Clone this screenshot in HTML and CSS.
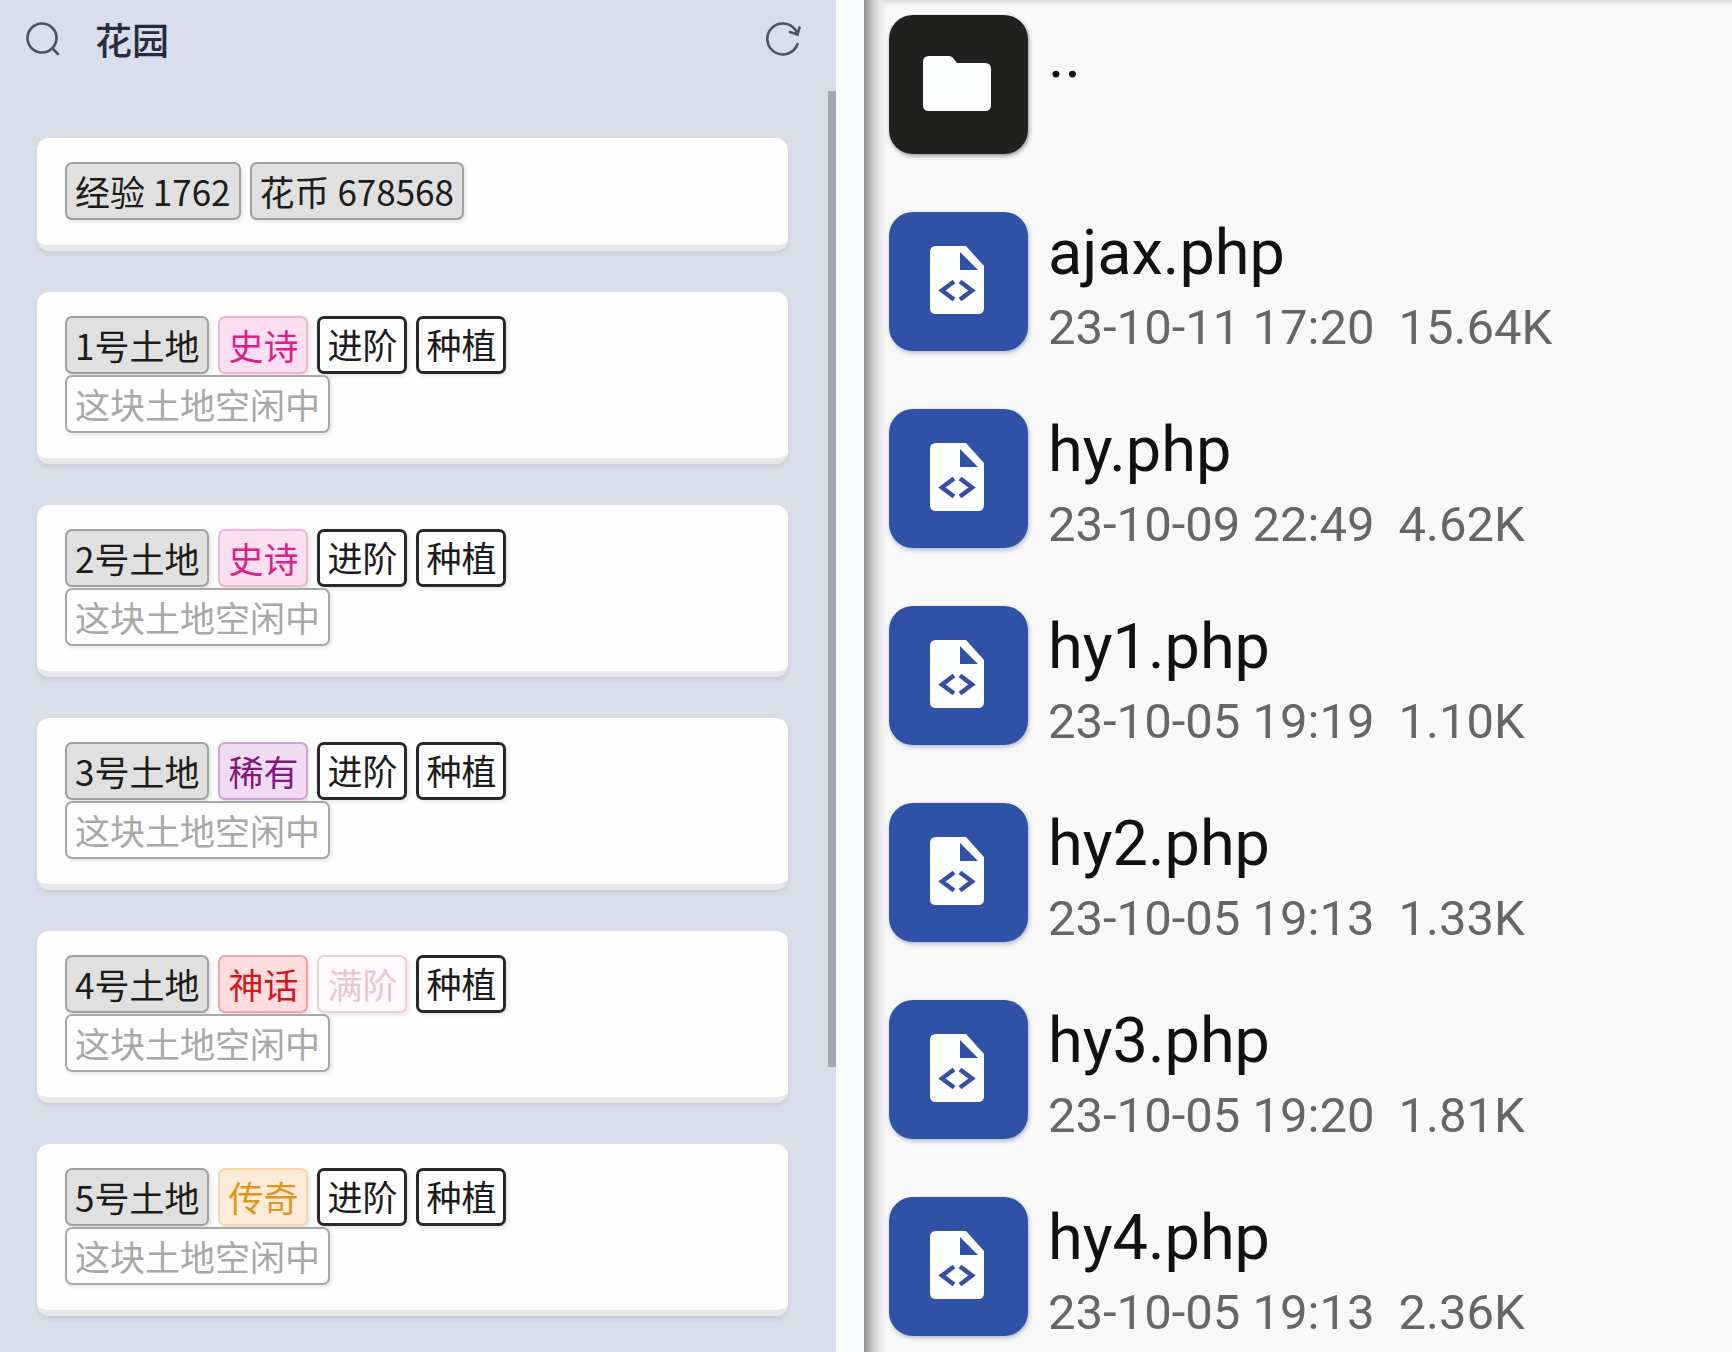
FILE: index.html
```html
<!DOCTYPE html>
<html lang="zh-CN">
<head>
<meta charset="utf-8">
<meta name="viewport" content="width=device-width, initial-scale=1">
<title>花园</title>
<link rel="stylesheet" href="styles.css">
</head>
<body>
<svg class="sprite" aria-hidden="true">
  <symbol id="php" viewBox="0 0 54 68">
    <path fill="#fcfeff" fill-rule="evenodd" d="M6 0H36L54 20V62Q54 68 48 68H6Q0 68 0 62V6Q0 0 6 0ZM30 6V24H48Z"/>
    <path fill="none" stroke="#3350a4" stroke-width="4.500" d="M24 35.500L12 44.500L24 53.500M30 35.500L42 44.500L30 53.500"/>
  </symbol>
</svg>
<div class="app">
  <main class="garden">
    <header class="bar">
      <button class="icon-btn" aria-label="搜索">
        <svg width="34" height="34" viewBox="0 0 34 34" fill="none" stroke="#4b5263" stroke-width="2.600" stroke-linecap="round"><circle cx="16" cy="16" r="14.500"/><path d="M26.500 26.500L32 32"/></svg>
      </button>
      <h1 class="title">花园</h1>
      <button class="icon-btn" aria-label="刷新">
        <svg width="36" height="36" viewBox="0 0 36 36" fill="none" stroke="#4b5263" stroke-width="2.600" stroke-linecap="round"><path d="M32.500 23A15.500 15.500 0 1 1 30.500 9L32.500 12.500M25 11L32.500 13.500L34.500 6.500"/></svg>
      </button>
    </header>
    <div class="cards">
      <section class="card">
        <div class="row"><span class="tag plain">经验 1762</span><span class="tag plain">花币 678568</span></div>
      </section>
      <section class="card">
        <div class="row"><span class="tag plain">1号土地</span><span class="tag epic">史诗</span><button class="tag action">进阶</button><button class="tag action">种植</button></div>
        <div class="row"><span class="tag idle">这块土地空闲中</span></div>
      </section>
      <section class="card">
        <div class="row"><span class="tag plain">2号土地</span><span class="tag epic">史诗</span><button class="tag action">进阶</button><button class="tag action">种植</button></div>
        <div class="row"><span class="tag idle">这块土地空闲中</span></div>
      </section>
      <section class="card">
        <div class="row"><span class="tag plain">3号土地</span><span class="tag rare">稀有</span><button class="tag action">进阶</button><button class="tag action">种植</button></div>
        <div class="row"><span class="tag idle">这块土地空闲中</span></div>
      </section>
      <section class="card">
        <div class="row"><span class="tag plain">4号土地</span><span class="tag myth">神话</span><button class="tag maxed" disabled>满阶</button><button class="tag action">种植</button></div>
        <div class="row"><span class="tag idle">这块土地空闲中</span></div>
      </section>
      <section class="card">
        <div class="row"><span class="tag plain">5号土地</span><span class="tag legend">传奇</span><button class="tag action">进阶</button><button class="tag action">种植</button></div>
        <div class="row"><span class="tag idle">这块土地空闲中</span></div>
      </section>
    </div>
    <div class="scrollbar"></div>
  </main>
  <nav class="files" aria-label="文件">
    <a class="file" href="#"><span class="tile folder"><svg width="68" height="55" viewBox="0 0 68 55"><path fill="#fdfefe" d="M6 0H26Q28 0 30 2L34 7H62Q68 7 68 13V49Q68 55 62 55H6Q0 55 0 49V6Q0 0 6 0Z"/></svg></span><span class="info"><span class="name">..</span></span></a>
    <a class="file" href="#"><span class="tile"><svg width="54" height="68"><use href="#php"/></svg></span><span class="info"><span class="name">ajax.php</span><span class="meta"><span>23-10-11 17:20</span><span>15.64K</span></span></span></a>
    <a class="file" href="#"><span class="tile"><svg width="54" height="68"><use href="#php"/></svg></span><span class="info"><span class="name">hy.php</span><span class="meta"><span>23-10-09 22:49</span><span>4.62K</span></span></span></a>
    <a class="file" href="#"><span class="tile"><svg width="54" height="68"><use href="#php"/></svg></span><span class="info"><span class="name">hy1.php</span><span class="meta"><span>23-10-05 19:19</span><span>1.10K</span></span></span></a>
    <a class="file" href="#"><span class="tile"><svg width="54" height="68"><use href="#php"/></svg></span><span class="info"><span class="name">hy2.php</span><span class="meta"><span>23-10-05 19:13</span><span>1.33K</span></span></span></a>
    <a class="file" href="#"><span class="tile"><svg width="54" height="68"><use href="#php"/></svg></span><span class="info"><span class="name">hy3.php</span><span class="meta"><span>23-10-05 19:20</span><span>1.81K</span></span></span></a>
    <a class="file" href="#"><span class="tile"><svg width="54" height="68"><use href="#php"/></svg></span><span class="info"><span class="name">hy4.php</span><span class="meta"><span>23-10-05 19:13</span><span>2.36K</span></span></span></a>
  </nav>
</div>
</body>
</html>
```
FILE: styles.css
```css
* {
  box-sizing: border-box;
}

body {
  margin: 0;
  background: #fafbfd;
  font-family: "Noto Sans CJK SC", sans-serif;
}

.sprite {
  display: none;
}

.app {
  display: grid;
  grid-template-columns: 836fr 868fr;
  gap: 28px;
  min-height: 100vh;
}

/* Garden pane */
.garden {
  position: relative;
  background: #d8deea;
}

.bar {
  display: flex;
  align-items: center;
  height: 78px;
  padding: 0 35px 0 26px;
}

.icon-btn {
  display: flex;
  padding: 0;
  border: 0;
  background: none;
}

.title {
  flex: 1;
  margin: 0 0 0 35px;
  color: #262c3d;
  font-size: 37px;
  font-weight: 500;
  line-height: 52px;
}

.cards {
  display: flex;
  flex-direction: column;
  gap: 41px;
  padding: 60px 48px 34px 37px;
}

.card {
  display: flex;
  flex-direction: column;
  gap: 1px;
  padding: 24px 28px 25px;
  border-bottom: 6px solid #e6e8ea;
  border-radius: 12px;
  background: #fefefe;
  box-shadow: 0 3px 4px rgba(120, 120, 130, 0.15);
}

.row {
  display: flex;
  gap: 9px;
}

.tag {
  height: 58px;
  padding: 0 8px;
  border: 2px solid;
  border-radius: 7px;
  font-family: inherit;
  font-size: 35px;
  font-weight: 400;
  line-height: 54px;
  white-space: nowrap;
  box-shadow: 2px 2px 4px rgba(0, 0, 0, 0.1);
}

.plain {
  border-color: #a0a0a0;
  background: #e0e0e0;
  color: #1c1c1c;
}

.action {
  border-width: 3px;
  padding: 0 7px 2px;
  line-height: 50px;
  border-color: #28282a;
  background: #fdfdfe;
  color: #1c1c1c;
}

.idle {
  border-color: #a8a8a8;
  background: #fdfdfd;
  color: #a8a8a8;
}

.epic {
  border-color: #f3b6d0;
  background: #fbdff0;
  color: #dc2088;
}

.rare {
  border-color: #cfa6d2;
  background: #f0dcf2;
  color: #80187e;
}

.myth {
  border-color: #f4a4ac;
  background: #fddedd;
  color: #d8151d;
}

.legend {
  border-color: #f9d8a8;
  background: #fcebd8;
  color: #e2951c;
}

.maxed {
  border-color: #f0ccd8;
  background: #fffafd;
  color: #ecc4d2;
}

.scrollbar {
  position: absolute;
  top: 91px;
  right: 0;
  width: 8px;
  height: 976px;
  background: #a4a6b2;
}

/* File list pane */
.files {
  display: flex;
  flex-direction: column;
  gap: 58px;
  padding: 15px 24px 0 25px;
  background:
    linear-gradient(to right, #8e9190, #c4c6c5 8px, #e8e9e8 16px, transparent 23px),
    linear-gradient(to bottom, #d9dbd8, transparent 6px),
    #f8f8f8;
  font-family: Roboto, sans-serif;
}

.file {
  display: flex;
  gap: 20px;
  height: 139px;
  color: #111;
  text-decoration: none;
}

.tile {
  display: flex;
  flex: none;
  align-items: center;
  justify-content: center;
  width: 139px;
  height: 139px;
  padding: 0 3px 3px 0;
  border-radius: 24px;
  background: #3052a6;
  box-shadow: 1px 2px 4px rgba(60, 90, 150, 0.4);
}

.folder {
  background: #20211f;
  box-shadow: 1px 2px 4px rgba(0, 0, 0, 0.4);
}

.info {
  display: flex;
  flex-direction: column;
  gap: 6px;
}

.name {
  font-size: 63px;
  line-height: 82px;
}

.meta {
  display: flex;
  gap: 24px;
  color: #666;
  font-size: 49px;
  line-height: 56px;
  white-space: nowrap;
}
```
